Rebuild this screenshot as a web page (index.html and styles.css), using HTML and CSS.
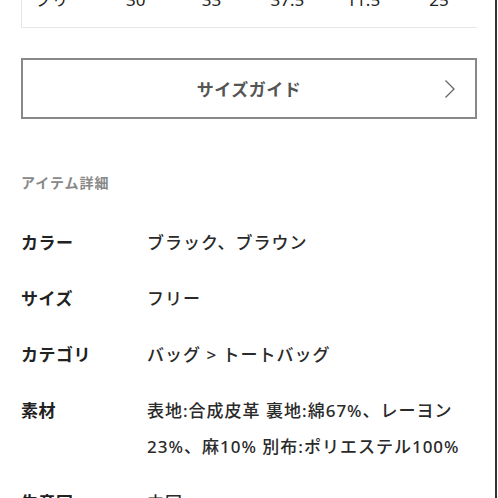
FILE: index.html
```html
<!DOCTYPE html>
<html lang="ja">
<head>
  <meta charset="UTF-8" />
  <meta name="viewport" content="width=device-width, initial-scale=1.0" />
  <title>アイテム詳細</title>
  <link rel="stylesheet" href="styles.css">
</head>
<body>
  <div class="page">
    <div class="content">
      <!-- size table (scrolled, last row only) -->
      <div class="size-table">
        <div class="size-row">
          <span>フリー</span>
          <span>30</span>
          <span>33</span>
          <span>37.5</span>
          <span>11.5</span>
          <span>25</span>
        </div>
      </div>

      <button class="guide-btn" type="button">
        <span class="guide-label">サイズガイド</span>
        <svg class="chevron" width="12" height="20" viewBox="0 0 12 20">
          <polyline points="1.5,1.5 10,10 1.5,18.5" fill="none" stroke="#666" stroke-width="1.3" />
        </svg>
      </button>

      <h2 class="section-title">アイテム詳細</h2>

      <dl class="details">
        <dt>カラー</dt>
        <dd>ブラック、ブラウン</dd>

        <dt>サイズ</dt>
        <dd>フリー</dd>

        <dt>カテゴリ</dt>
        <dd>バッグ &gt; トートバッグ</dd>

        <dt>素材</dt>
        <dd>表地:合成皮革 裏地:綿67%、レーヨン23%、麻10% 別布:ポリエステル100%</dd>

        <dt>生産国</dt>
        <dd>中国</dd>
      </dl>
    </div>
  </div>
</body>
</html>
```

FILE: styles.css
```css
body {
  margin: 0;
  padding: 0;
  background: #fff;
  font-family: "Noto Sans", "Noto Sans CJK JP", sans-serif;
  color: #222;
  overflow: hidden;
}

.page {
  width: 495px;
  height: 498px;
  border-right: 2px solid #333;
  overflow: hidden;
}

.content {
  padding: 0 18px 0 21px;
}

.size-table {
  margin-top: -10px;
  border-left: 1px solid #e6e6e6;
  border-bottom: 1px solid #e6e6e6;
}

.size-row {
  display: grid;
  grid-template-columns: repeat(6, 1fr);
  font-size: 17px;
  line-height: 20px;
  padding-bottom: 17px;
  color: #222;
}

.size-row span {
  text-align: center;
}

.guide-btn {
  display: flex;
  align-items: center;
  justify-content: center;
  position: relative;
  width: 100%;
  height: 61px;
  margin-top: 30px;
  padding: 0;
  background: #fff;
  border: 2px solid #888;
  font-family: inherit;
  cursor: pointer;
}

.guide-label {
  font-size: 17px;
  font-weight: 700;
  letter-spacing: 0.5px;
  color: #555;
}

.chevron {
  position: absolute;
  right: 19px;
  top: 19px;
}

.section-title {
  margin: 54px 0 0;
  font-size: 14px;
  line-height: 20px;
  font-weight: 700;
  letter-spacing: 1px;
  color: #888;
}

.details {
  display: grid;
  grid-template-columns: 126px 1fr;
  row-gap: 20px;
  margin: 32px 0 0;
  font-size: 17px;
  line-height: 36px;
  letter-spacing: 0.5px;
}

.details dt {
  font-weight: 700;
  color: #222;
}

.details dd {
  margin: 0;
  font-weight: 500;
  letter-spacing: 1px;
  color: #2a2a2a;
}
```
